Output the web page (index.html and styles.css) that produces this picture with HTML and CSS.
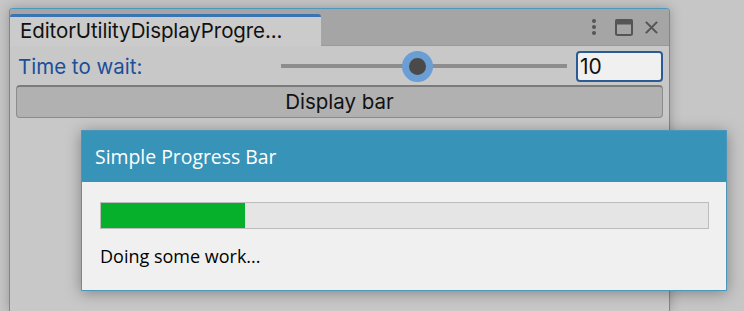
FILE: index.html
```html
<!DOCTYPE html>
<html lang="en">
<head>
    <meta charset="UTF-8">
    <title>EditorUtility.DisplayProgressBar</title>
    <link rel="stylesheet" href="styles.css">
</head>
<body>
    <!-- editor window -->
    <div class="editor-window">
        <div class="tab-bar">
            <div class="tab">EditorUtilityDisplayProgre...</div>
            <div class="tab-icons">
                <svg class="icon-dots" viewBox="0 0 6 18"><circle cx="3" cy="3" r="2"/><circle cx="3" cy="9" r="2"/><circle cx="3" cy="15" r="2"/></svg>
                <svg class="icon-max" viewBox="0 0 18 17"><rect x="1" y="1" width="16" height="15" rx="1.5" fill="none" stroke-width="2"/><rect x="1" y="1" width="16" height="4"/></svg>
                <svg class="icon-close" viewBox="0 0 16 16"><path d="M2 2L14 14M14 2L2 14" fill="none" stroke-width="2.2"/></svg>
            </div>
        </div>
        <div class="content">
            <div class="field-row">
                <label class="field-label">Time to wait:</label>
                <div class="slider">
                    <div class="slider-track"></div>
                    <div class="slider-knob" style="left: 47.5%;"></div>
                </div>
                <div class="number-field">10</div>
            </div>
            <div class="button">Display bar</div>
        </div>
    </div>

    <!-- progress dialog -->
    <div class="dialog">
        <div class="dialog-title">Simple Progress Bar</div>
        <div class="dialog-body">
            <div class="progress">
                <div class="progress-fill" style="width: 23.7%;"></div>
            </div>
            <div class="progress-info">Doing some work...</div>
        </div>
    </div>
</body>
</html>
```

FILE: styles.css
```css
* {
    margin: 0;
    padding: 0;
    box-sizing: border-box;
}

body {
    width: 744px;
    height: 311px;
    overflow: hidden;
    background: #c6c6c6;
    font-family: Inter, "Noto Sans", sans-serif;
    position: relative;
}

/* 编辑器窗口 */
.editor-window {
    margin: 8px 0 0 9px;
    width: 661px;
    height: 303px;
    background: #c8c8c8;
    border: 1px solid #4c97bd;
    border-bottom: none;
    border-radius: 4px 4px 0 0;
    box-shadow: 0 0 12px rgba(0, 0, 0, 0.25);
}

.tab-bar {
    display: flex;
    justify-content: space-between;
    align-items: flex-end;
    height: 37px;
    background: #a5a5a5;
    border-bottom: 1px solid #999;
    border-radius: 3px 3px 0 0;
}

.tab {
    width: 311px;
    height: 32px;
    background: #cbcbcb;
    border-top: 3px solid #3b74b5;
    border-radius: 3px 3px 0 0;
    padding: 1px 0 0 10px;
    font-size: 20.5px;
    letter-spacing: -0.1px;
    color: #111;
    white-space: nowrap;
    margin-bottom: -1px;
}

.tab-icons {
    display: flex;
    align-items: center;
    height: 100%;
    padding-right: 10px;
}

.tab-icons svg {
    fill: #555;
    stroke: #555;
}

.icon-dots {
    width: 6px;
    height: 18px;
    stroke: none !important;
    margin-right: 18px;
}

.icon-max {
    width: 18px;
    height: 17px;
    margin-right: 11px;
}

.icon-close {
    width: 15px;
    height: 15px;
}

/* 内容区域 */
.content {
    padding: 4px 6px 0 6px;
}

.field-row {
    display: flex;
    align-items: center;
    height: 32px;
}

.field-label {
    width: 265px;
    padding-left: 2px;
    font-size: 20.5px;
    color: #1a4f9a;
}

.slider {
    position: relative;
    width: 286px;
    height: 32px;
    margin-right: 9px;
}

.slider-track {
    position: absolute;
    left: 0;
    right: 0;
    top: 14px;
    height: 4px;
    background: #8d8d8d;
}

.slider-knob {
    position: absolute;
    top: 1px;
    width: 31px;
    height: 31px;
    margin-left: -15px;
    border-radius: 50%;
    background: #4a4a4a;
    border: 7px solid #6a9ed4;
}

.number-field {
    width: 87px;
    height: 31px;
    background: #f0f0f0;
    border: 2px solid #2a5b94;
    border-radius: 4px;
    font-size: 21px;
    line-height: 27px;
    padding-left: 2px;
    color: #111;
}

.button {
    margin-top: 3px;
    height: 33px;
    background: #b1b1b1;
    border: 1px solid #8c8c8c;
    border-top: 2px solid #7b7b7b;
    border-radius: 4px;
    text-align: center;
    font-size: 20.5px;
    line-height: 29px;
    color: #111;
}

/* 进度对话框 */
.dialog {
    position: absolute;
    left: 81px;
    top: 130px;
    width: 646px;
    height: 161px;
    background: #f0f0f0;
    border: 1px solid #4a97bb;
    box-shadow: 0 2px 14px rgba(0, 0, 0, 0.35);
    font-family: "Open Sans", "Noto Sans", sans-serif;
}

.dialog-title {
    height: 51px;
    background: #3793b7;
    color: #fff;
    font-size: 19.4px;
    padding: 12px 0 0 13px;
}

.dialog-body {
    padding: 20px 17px 0 18px;
}

.progress {
    height: 27px;
    background: #e5e5e5;
    border: 1px solid #bcbcbc;
}

.progress-fill {
    height: 100%;
    background: #06b02a;
}

.progress-info {
    margin-top: 15px;
    font-size: 18px;
    color: #000;
}
```
